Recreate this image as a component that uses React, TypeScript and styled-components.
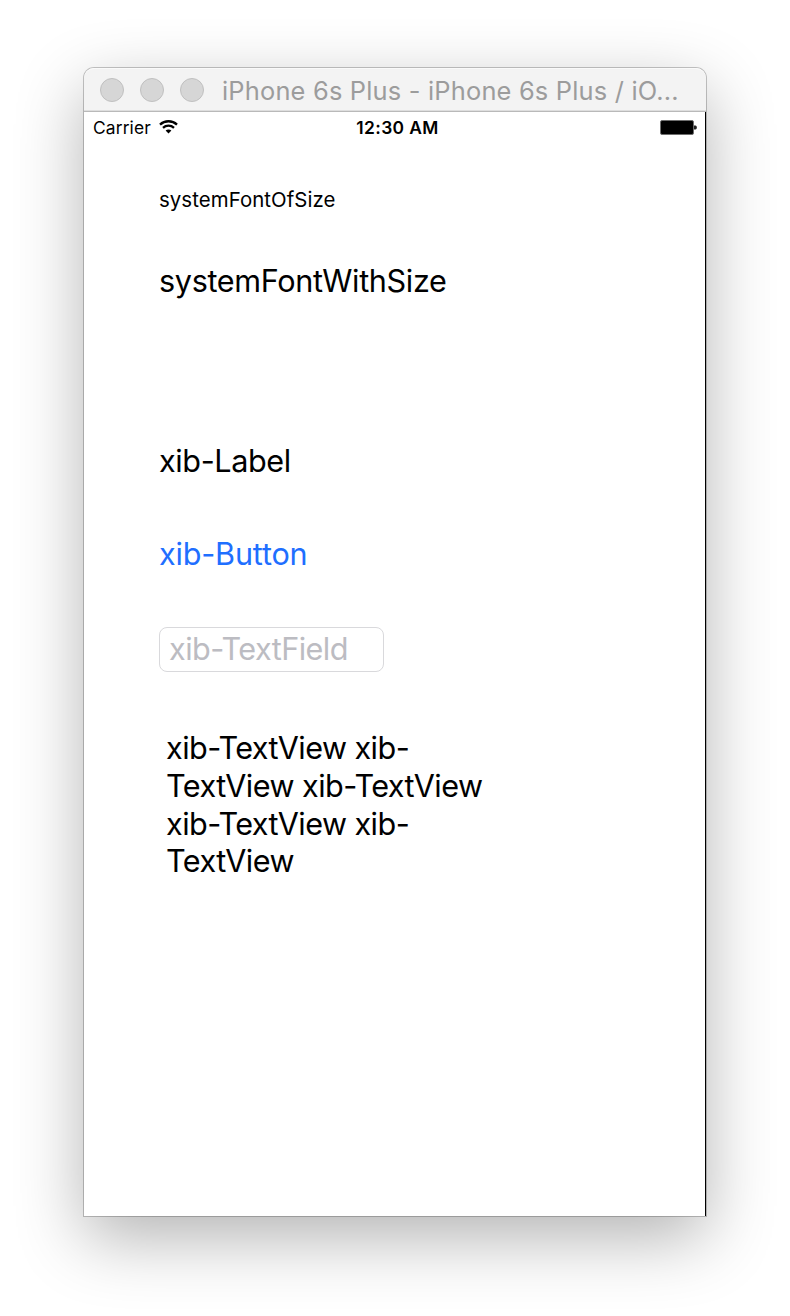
import React from 'react';
import styled, { createGlobalStyle } from 'styled-components';

const GlobalStyle = createGlobalStyle`
  * { box-sizing: border-box; }
  html { background: #fff; }
  body {
    margin: 0;
    font-family: Inter, "Liberation Sans", sans-serif;
    color: #000;
    overflow: hidden;
  }
`;

const Desktop = styled.main`
  height: 1316px;
  padding: 68px 84px 100px;
  background: #fff;
`;

const Window = styled.section`
  width: 622px;
  height: 1148px;
  display: flex;
  flex-direction: column;
  background: #fff;
  border-radius: 10px 10px 0 0;
  box-shadow: 0 0 0 1px rgba(0, 0, 0, 0.22), 0 22px 68px rgba(0, 0, 0, 0.3);
`;

const TitleBar = styled.header`
  flex: none;
  height: 44px;
  padding-left: 16px;
  display: flex;
  align-items: center;
  background: #f3f3f3;
  border-top: 1px solid #fafafa;
  border-bottom: 1px solid #b9b9b9;
  box-shadow: inset 0 -1px #dedede;
  border-radius: 10px 10px 0 0;
`;

const Lights = styled.div`
  display: flex;
  gap: 16px;
`;

const Light = styled.span`
  width: 24px;
  height: 24px;
  border-radius: 50%;
  background: #d6d6d6;
  border: 1px solid #c0c0c0;
`;

const Title = styled.h1`
  margin: 1px 0 0 18px;
  font-size: 25.4px;
  font-weight: 400;
  line-height: 34px;
  letter-spacing: 0.2px;
  color: #9c9c9c;
  white-space: nowrap;
`;

const Screen = styled.div`
  flex: 1;
  display: flex;
  flex-direction: column;
  border-right: 1px solid #000;
`;

const StatusBar = styled.div`
  height: 30px;
  padding: 1px 8px 0 9px;
  display: grid;
  grid-template-columns: 1fr auto 1fr;
  align-items: center;
  font-size: 17.4px;
  line-height: 30px;
`;

const Carrier = styled.div`
  display: flex;
  align-items: center;
  gap: 8px;
  letter-spacing: 0.12px;
`;

const WifiIcon = styled.svg`
  margin-bottom: 2px;
`;

const Clock = styled.time`
  padding-left: 5px;
  font-weight: 600;
  letter-spacing: 0.38px;
`;

const BatteryIcon = styled.svg`
  justify-self: end;
  margin-bottom: 2px;
`;

const Content = styled.div`
  display: flex;
  flex-direction: column;
  align-items: flex-start;
  padding: 39px 0 0 75px;
`;

const Label = styled.div<{ $size?: number; $gap?: number; $tracking?: number }>`
  font-size: ${p => p.$size ?? 30.6}px;
  line-height: 38px;
  letter-spacing: ${p => p.$tracking ?? 0}px;
  margin-bottom: ${p => p.$gap ?? 0}px;
  white-space: nowrap;
`;

const LinkButton = styled.button`
  margin: 0 0 54px;
  padding: 0;
  border: 0;
  background: none;
  font: inherit;
  font-size: 30.6px;
  line-height: 38px;
  letter-spacing: -0.2px;
  color: #1f6fff;
`;

const Field = styled.div`
  width: 225px;
  height: 45px;
  padding: 0 9px;
  border: 1px solid #d9d9dc;
  border-radius: 8px;
  font-size: 30.6px;
  line-height: 41px;
  letter-spacing: -0.54px;
  color: #bcbcc2;
  white-space: nowrap;
`;

const TextView = styled.p`
  width: 326px;
  margin: 57px 0 0 7px;
  font-size: 30.6px;
  line-height: 37.75px;
  letter-spacing: -0.55px;
`;

export default function App() {
  return (
    <Desktop>
      <GlobalStyle />
      <Window>
        <TitleBar>
          <Lights>
            <Light />
            <Light />
            <Light />
          </Lights>
          <Title>iPhone 6s Plus - iPhone 6s Plus / iO...</Title>
        </TitleBar>
        <Screen>
          <StatusBar>
            <Carrier>
              <span>Carrier</span>
              <WifiIcon width="19" height="14" viewBox="0 0 19 14" fill="none" stroke="#000" strokeWidth="2.3">
                <path d="M1 4.6C5.7 0.1 13.3 0.1 18 4.6" />
                <path d="M4 7.8C7.1 4.9 11.9 4.9 15 7.8" />
                <path d="M9.5 13.4L6.6 10.5C8.2 9 10.8 9 12.4 10.5Z" fill="#000" stroke="none" />
              </WifiIcon>
            </Carrier>
            <Clock>12:30 AM</Clock>
            <BatteryIcon width="37" height="15" viewBox="0 0 37 15">
              <rect x="0.5" y="0.5" width="33" height="14" rx="1.5" fill="#000" stroke="#6e6e6e" />
              <path d="M34 5.5H35.5C37.3 6 37.3 9 35.5 9.5H34Z" fill="#222" />
            </BatteryIcon>
          </StatusBar>
          <Content>
            <Label $size={20.4} $gap={43} $tracking={0.07}>systemFontOfSize</Label>
            <Label $gap={142} $tracking={-0.35}>systemFontWithSize</Label>
            <Label $gap={55} $tracking={-0.4}>xib-Label</Label>
            <LinkButton>xib-Button</LinkButton>
            <Field>xib-TextField</Field>
            <TextView>
              xib-TextView xib-TextView xib-TextView xib-TextView xib-TextView
            </TextView>
          </Content>
        </Screen>
      </Window>
    </Desktop>
  );
}
